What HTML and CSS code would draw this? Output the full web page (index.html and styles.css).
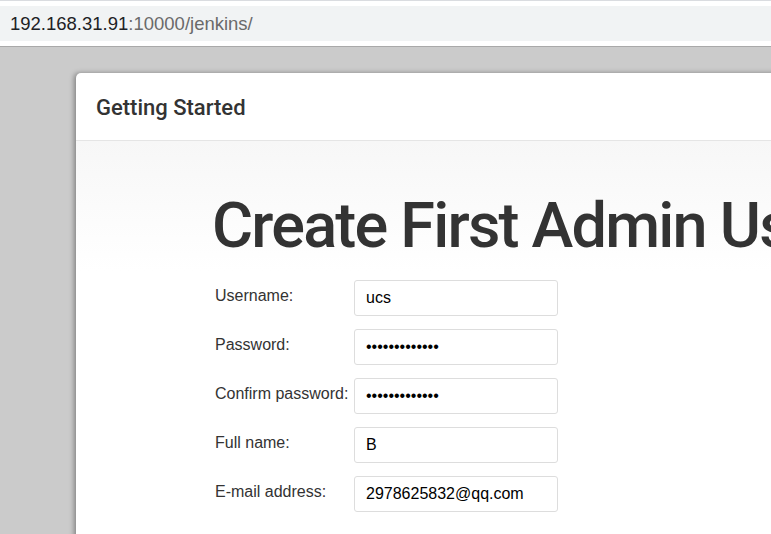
FILE: index.html
```html
<!DOCTYPE html>
<html lang="en">
<head>
    <meta charset="UTF-8">
    <meta name="viewport" content="width=device-width, initial-scale=1.0">
    <title>Jenkins</title>
    <link rel="stylesheet" href="styles.css">
</head>
<body>
    <div class="chrome">
        <div class="address"><span class="host">192.168.31.91</span>:10000/jenkins/</div>
    </div>
    <div class="backdrop">
        <div class="dialog">
            <div class="dialog-header">Getting Started</div>
            <div class="dialog-body">
                <h1 class="title">Create First Admin User</h1>
                <div class="form">
                    <label>Username:</label>
                    <input type="text" class="field" value="ucs">
                    <label>Password:</label>
                    <input type="password" class="field" value="ucs1234567890">
                    <label>Confirm password:</label>
                    <input type="password" class="field" value="ucs1234567890">
                    <label>Full name:</label>
                    <input type="text" class="field" value="B">
                    <label>E-mail address:</label>
                    <input type="text" class="field" value="2978625832@qq.com">
                </div>
            </div>
        </div>
    </div>
</body>
</html>
```
FILE: styles.css
```css
*{
    box-sizing: border-box;
}
html,body{
    margin: 0;
    height: 100%;
    overflow: hidden;
}
body{
    font-family: "Liberation Sans", Arial, sans-serif;
    background: #cbcbcb;
}
.chrome{
    background: #fff;
    border-top: 1px solid #dadce0;
    padding: 5px 0 5px 0;
    border-bottom: 1px solid #a9a9a9;
}
.address{
    background: #f1f3f4;
    height: 35px;
    padding-left: 10px;
    font-size: 18.5px;
    line-height: 36px;
    color: #6a6a6a;
}
.host{
    color: #202124;
}
.backdrop{
    padding: 26px 0 0 76px;
    height: 100%;
}
.dialog{
    background: #fff;
    border-radius: 5px 0 0 0;
    box-shadow: -2px 0 5px rgba(0,0,0,0.35);
    height: 100%;
    width: 800px;
}
.dialog-header{
    font-family: Roboto, sans-serif;
    font-weight: 500;
    font-size: 22px;
    color: #333;
    height: 68px;
    line-height: 70px;
    padding-left: 20px;
    border-bottom: 1px solid #e5e5e5;
}
.dialog-body{
    background: linear-gradient(#f7f7f7, #fff 130px);
    padding: 47px 0 0 136px;
    height: 100%;
}
.title{
    font-family: Roboto, sans-serif;
    font-weight: 500;
    font-size: 63px;
    letter-spacing: -1.8px;
    color: #333;
    margin: 0 0 16px 0;
    line-height: 76px;
    white-space: nowrap;
}
.form{
    display: grid;
    grid-template-columns: 139px 204px;
    row-gap: 13px;
    padding-left: 3px;
}
label{
    font-size: 16px;
    color: #333;
    padding-top: 7px;
}
.field{
    height: 36px;
    border: 1px solid #ddd;
    border-radius: 3px;
    padding: 0 11px;
    font-family: "Liberation Sans", Arial, sans-serif;
    font-size: 16px;
    color: #000;
    background: #fff;
}
```
